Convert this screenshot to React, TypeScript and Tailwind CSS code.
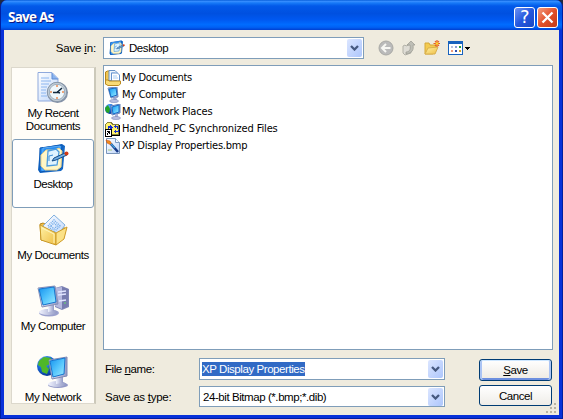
import type { ReactNode } from 'react';

const Gradients = () => (
  <svg className="absolute size-0" aria-hidden="true">
    <defs>
      <linearGradient id="screen" x1="0" y1="0" x2="1" y2="1">
        <stop offset="0" stopColor="#1592ee" /><stop offset=".5" stopColor="#53c4fc" /><stop offset="1" stopColor="#a0ecff" />
      </linearGradient>
      <linearGradient id="metal" x1="0" y1="0" x2="1" y2="0">
        <stop offset="0" stopColor="#f2f4ff" /><stop offset="1" stopColor="#9299c5" />
      </linearGradient>
      <linearGradient id="folder" x1="0" y1="0" x2="1" y2="1">
        <stop offset="0" stopColor="#fff3a8" /><stop offset="1" stopColor="#efbd43" />
      </linearGradient>
      <linearGradient id="paper" x1="0" y1="0" x2="1" y2="1">
        <stop offset="0" stopColor="#ffffff" /><stop offset="1" stopColor="#bdd5fa" />
      </linearGradient>
      <radialGradient id="globe" cx=".35" cy=".25" r=".8">
        <stop offset="0" stopColor="#6db6ff" /><stop offset=".5" stopColor="#1768d8" /><stop offset="1" stopColor="#06328f" />
      </radialGradient>
    </defs>
  </svg>
);

const RecentIcon = () => (
  <svg viewBox="0 0 32 32" className="size-8">
    <path d="M1 .5h14l6 6V29H1z" fill="url(#paper)" stroke="#8fa9dc" />
    <path d="M15 1v6h6" fill="#8ab4ef" stroke="#5f8bd3" />
    <path d="M4 6h8M4 9h10M4 12h8M4 15h6M4 18h5M4 21h5M4 24h6" stroke="#8cb6ef" />
    <circle cx="20.5" cy="20.5" r="10.5" fill="#8592a8" />
    <circle cx="20" cy="20" r="9.7" fill="#c4ced8" stroke="#8797a8" />
    <circle cx="20" cy="20" r="7.7" fill="#f0f8fc" stroke="#9cadbd" />
    <path d="M20 13v2M20 25v2M13 20h2M25 20h2" stroke="#ec8a50" strokeWidth="1.5" />
    <path d="m25 16-5 4.5h-4M20 20l3 1" stroke="#13293e" strokeWidth="1.6" fill="none" />
  </svg>
);

const DesktopIcon = ({ className }: { className: string }) => (
  <svg viewBox="0 0 32 32" className={className}>
    <path d="m3 5 22-4 3 2-2 23-2 2-21 2-2-3z" fill="#1568c5" />
    <path d="m3 5 22-3-2 24-20 3z" fill="#2a8df0" stroke="#0b55b1" />
    <path d="m6 5 17-2-1 22-17 2z" fill="none" stroke="#75c3ff" strokeWidth=".7" />
    <path d="M9 7h8l5-2 3 3-1 16-4 3H8l-4-4V12z" fill="#fff6c6" stroke="#e6cf8a" />
    <path d="m11 8 8-2 3 3-2 13-10 1z" fill="#dff3ff" stroke="#4c9bdd" strokeWidth="1.3" />
    <path d="M12 18v-5l4-1" fill="none" stroke="#3d8ed4" />
    <path d="m17 15 11-5 2 2-11 5-4 1z" fill="#71aee3" stroke="#164c86" />
    <circle cx="29.5" cy="10.5" r="2" fill="#d33a13" />
  </svg>
);

const FolderIcon = () => (
  <svg viewBox="0 0 32 32" className="size-8">
    <path d="m3 10 3-1 4 2 2 2 16 1-9 15L4 26z" fill="#f0bf48" stroke="#b8871c" />
    <path d="M6 12 17 1l11 10-9 13-9-4z" fill="url(#paper)" stroke="#82b1df" />
    <path d="m11 12 6-6 6 6-6 6zM14 12l3-3 3 3-3 3z" fill="none" stroke="#72abe9" strokeWidth="1.5" strokeDasharray="1 1" />
    <path d="m3 11 16 8v12L4 26z" fill="url(#folder)" stroke="#c99a2a" />
    <path d="m19 19 11-6-3 12-8 6z" fill="#fbe187" stroke="#ce9a25" />
    <path d="m5 14 12 6v9" stroke="#fff7bf" fill="none" />
  </svg>
);

const ComputerIcon = () => (
  <svg viewBox="0 0 32 32" className="size-8">
    <path d="m18 3 7-2 7 3v18l-7 3-7-3z" fill="#8287b7" />
    <path d="m18 3 7-1v22l-7-3z" fill="#b6b9df" /><path d="m25 2 6 2v17l-6 3z" fill="#777caf" />
    <path d="m21 7 8-1M21 10l8-1M22 16l7-1" stroke="#e1e5ff" strokeWidth="1.5" /><path d="M27 18h2" stroke="#61e066" />
    <ellipse cx="12" cy="28" rx="10" ry="3.4" fill="#9ba1cd" /><ellipse cx="11" cy="27" rx="9" ry="3" fill="url(#metal)" />
    <path d="m11 19 6-1v8l-6 1z" fill="url(#metal)" />
    <path d="m1 3 17-2 3 18-16 3z" fill="url(#metal)" stroke="#878eb6" />
    <path d="m2 4 15-2 2 15-13 3z" fill="url(#screen)" stroke="#1575cf" />
  </svg>
);

const NetworkIcon = () => (
  <svg viewBox="0 0 32 32" className="size-8">
    <circle cx="10" cy="10" r="10" fill="url(#globe)" />
    <path d="M7 1 2 5 1 9l3 2 1 5 5 2 2-5-3-3 4-2 1-6zM13 7l-1 5 4 5 3-2V8z" fill="#4fb829" />
    <ellipse cx="21" cy="29" rx="10" ry="3" fill="#9298c6" /><ellipse cx="20" cy="28" rx="9" ry="3" fill="url(#metal)" />
    <path d="m19 20 7-1v8l-7 1z" fill="url(#metal)" />
    <path d="m12 4 18-3v19l-15 3z" fill="url(#metal)" stroke="#8189b4" />
    <path d="m13 5 15-3-1 16-11 3z" fill="url(#screen)" stroke="#1675cf" />
  </svg>
);

const DocsSmall = () => (
  <svg viewBox="0 0 16 16" className="size-4 shrink-0">
    <path d="M.5 4V2l2-1h2l1 2v11h-5z" fill="#efc553" stroke="#b58519" />
    <path d="M4 .5h6l2 2v8H4z" fill="#eef7ff" stroke="#6591c5" /><path d="M6 3h4" stroke="#9abfe8" />
    <path d="M6.5 3h6l2 2v6h-8z" fill="#fff" stroke="#6593ce" /><path d="M8 6h4M8 8h5" stroke="#a9cef1" />
    <path d="M.5 10H3l1 1h11.5v3l-2 1.5H3L.5 14z" fill="#f9db77" stroke="#ba8b23" />
  </svg>
);
const PcSmall = () => (
  <svg viewBox="0 0 16 16" className="size-4 shrink-0">
    <path d="m3 1 9-1 1 10-7 1z" fill="url(#metal)" stroke="#7188ba" />
    <path d="m4 2 7-1 1 7-6 2z" fill="url(#screen)" stroke="#146bc4" />
    <path d="m8 11 3-1 1 3-3 1z" fill="#9da8d1" /><ellipse cx="9" cy="14" rx="4.5" ry="1.6" fill="#b8bfe2" stroke="#7e89b7" strokeWidth=".6" />
  </svg>
);
const NetSmall = () => (
  <svg viewBox="0 0 16 16" className="size-4 shrink-0">
    <circle cx="5" cy="5" r="5" fill="url(#globe)" /><path d="M3 1 0 4l1 4 3 1 1-4z" fill="#25a527" />
    <path d="m6 2 9-2v9l-8 2z" fill="url(#metal)" stroke="#6781b9" /><path d="m7 3 7-2v7l-6 2z" fill="url(#screen)" stroke="#126fcc" />
    <path d="M10 10h3v4h-3z" fill="#a8b1d9" /><ellipse cx="11" cy="14" rx="4.5" ry="1.5" fill="#bbc1e3" stroke="#7984b4" strokeWidth=".6" />
  </svg>
);
const SyncSmall = () => (
  <svg viewBox="0 0 16 16" className="size-4 shrink-0" shapeRendering="crispEdges">
    <path d="M0 3h1V2h1V1h5v1h1v1h6v11H0z" fill="#85803a" /><path d="M1 3h1V2h4v1h1v1h6v9H1z" fill="#fff36d" />
    <path d="M14 4h1v11H7v-1h7z" fill="#000" />
    <path d="M3 5h2V4h1v1h1v1h1v1H7v1H6v1H5V7H4v1H3zM10 4h1v1h2v3h-1V6h-1v1h-1V6H9V5h1zM9 10h1V9h1v1h2V9h1v2h-3v1h-1v-1H9z" fill="#1631cf" />
    <path d="M0 8h7v8H0z" /><path d="M1 9h5v6H1z" fill="#fff" /><path d="M2 10h3v3H4v-1H3v2H2v-2h1v-1H2z" />
  </svg>
);
const BitmapSmall = () => (
  <svg viewBox="0 0 16 16" className="size-4 shrink-0">
    <path d="M1.5.5h9l4 4v11h-13z" fill="url(#paper)" stroke="#7995ba" /><path d="M10.5.5v4h4" fill="#f6faff" stroke="#7d9bc2" />
    <path d="m1 2 4 1 2 3-1 1-4-2z" fill="#f28b19" stroke="#bd4514" strokeWidth=".5" />
    <path d="m6 6 7 8" stroke="#153887" strokeWidth="2.5" /><path d="m6 6 4 4" stroke="#41a1db" strokeWidth="1.2" />
    <path d="M3 12h4" stroke="#a5c779" />
  </svg>
);

const Arrow = () => (
  <span className="flex h-[18px] w-[15px] shrink-0 items-center justify-center rounded-[2px] bg-linear-to-br from-[#dce6ff] to-[#adc6fc]">
    <svg viewBox="0 0 9 6" className="h-1.5 w-[9px]">
      <path d="m1 1 3.5 3.5L8 1" fill="none" stroke="#46597f" strokeWidth="2.3" />
    </svg>
  </span>
);

const Combo = ({ children, className }: { children: ReactNode; className: string }) => (
  <div className={`flex items-center justify-between border border-[#7f9db9] bg-white pr-px ${className}`}>{children}<Arrow /></div>
);

const Place = ({ icon, children, className }: { icon: ReactNode; children: ReactNode; className: string }) => (
  <div className={`flex shrink-0 flex-col items-center text-center leading-[13px] ${className}`}>
    {icon}<span className="mt-[3px] whitespace-nowrap">{children}</span>
  </div>
);

const files = [
  { name: 'My Documents', icon: <DocsSmall />, fit: 'tracking-[-0.35px]' },
  { name: 'My Computer', icon: <PcSmall />, fit: 'tracking-[-0.28px]' },
  { name: 'My Network Places', icon: <NetSmall />, fit: 'tracking-[-0.18px]' },
  { name: 'Handheld_PC Synchronized Files', icon: <SyncSmall />, fit: 'tracking-[-0.14px]' },
  { name: 'XP Display Properties.bmp', icon: <BitmapSmall />, fit: 'tracking-[-0.22px]' },
];

export default function App() {
  return (
    <main className="h-[419px] w-[563px] bg-[#202a40] font-['Liberation_Sans',sans-serif] text-[11.5px] leading-[14px] tracking-[-0.43px] text-black">
      <Gradients />
      <div className="flex h-full flex-col overflow-hidden rounded-t-[7px] border-x border-b border-[#001ea0] bg-[#0831d9]">
        <header className="flex h-[30px] shrink-0 items-center bg-[linear-gradient(180deg,#0058d6_0,#398fff_4%,#1679f7_10%,#0259e9_20%,#0050e0_45%,#0058f0_65%,#006cff_82%,#0060f4_91%,#003fd0_100%)] pr-1 pl-[7px] pt-1">
          <h1 className="flex-1 font-['Open_Sans',sans-serif] text-[13.5px] leading-4 font-bold tracking-[-0.75px] text-white [text-shadow:1px_1px_#0a1883]">Save As</h1>
          <div className="flex gap-[2px]">
            <button className="flex size-[21px] items-center justify-center rounded-[3px] border border-white bg-linear-to-br from-[#6e91f2] via-[#2458df] to-[#1947c3] font-['DejaVu_Sans',sans-serif] text-[18px] leading-none text-white">?</button>
            <button aria-label="Close" className="flex size-[21px] items-center justify-center rounded-[3px] border border-white bg-linear-to-br from-[#f19a7d] via-[#e3502a] to-[#c43b17]">
              <svg viewBox="0 0 13 13" className="size-[13px]"><path d="m1.5 1.5 10 10m0-10-10 10" stroke="white" strokeWidth="2.3" /></svg>
            </button>
          </div>
        </header>
        <section className="relative mx-[3px] mb-[3px] flex min-h-0 flex-1 flex-col bg-[#efebde]">
          <div className="flex h-[35px] shrink-0 items-start pt-[7px]">
            <label className="w-[99px] pt-[4px] pr-[7px] text-right tracking-[-0.15px]">Save <u>i</u>n:</label>
            <Combo className="h-[22px] w-[261px] pl-[5px]">
              <span className="flex flex-1 items-center gap-[4px]"><DesktopIcon className="size-4" />Desktop</span>
            </Combo>
            <div className="ml-[14px] flex h-[22px] items-center">
              <svg viewBox="0 0 16 16" className="size-4"><circle cx="8" cy="8" r="7" fill="#bababa" stroke="#a9a9a5" /><path d="M12.5 8H4m4-4L4 8l4 4" fill="none" stroke="#f7f7f3" strokeWidth="2" /></svg>
              <svg viewBox="0 0 16 16" className="ml-[7px] size-4"><path d="m2 6 2-1 1 1 5-2v9l-6 2-2-2z" fill="#dedcd5" stroke="#b2b1a8" /><path d="M5 12c3 0 5-2 4-7H6l4-4 4 4h-2c1 5-1 8-7 9z" fill="#bebeb6" stroke="#999990" strokeWidth=".7" /></svg>
              <svg viewBox="0 0 16 16" className="ml-[7px] size-4"><path d="M1 14V3h4l1 2h6v3l-3 6z" fill="#f3cb51" stroke="#d5a83a" /><path d="m1 14 3-6 10-1-3 7z" fill="url(#folder)" stroke="#d8b04e" /><path d="M13 0v7M9.5 3.5h6.5M11 1l4 5m0-5-4 5" stroke="#e75e1c" strokeWidth="1.2" /><circle cx="13" cy="3.5" r="1.3" fill="#ffd72d" /></svg>
              <svg viewBox="0 0 15 14" className="ml-[8px] h-[14px] w-[15px]" shapeRendering="crispEdges"><path d="M0 0h15v14H0z" fill="#1762be" /><path d="M1 3h13v10H1z" fill="#fff" /><path d="M3 5h2v1H3z" fill="#879ed9" /><path d="M3 5h2v2H3z" fill="#b9c1de" /><path d="M7 5h2v2H7z" fill="#879ed9" /><path d="M11 5h2v2h-2z" fill="#269e35" /><path d="M3 9h2v2H3z" fill="#ee9b7b" /><path d="M7 9h2v2H7z" fill="#304fae" /><path d="M11 9h2v2h-2z" fill="#d6a429" /></svg>
              <svg viewBox="0 0 5 3" className="ml-[2px] h-[3px] w-[5px]" shapeRendering="crispEdges"><path d="M0 0h5v1H4v1H3v1H2V2H1V1H0z" /></svg>
            </div>
          </div>
          <div className="flex min-h-0 flex-1 pl-[7px]">
            <nav className="mt-[2px] flex h-[337px] w-[85px] shrink-0 flex-col overflow-hidden border border-r-2 border-[#dcd8cc] bg-[#fffdf8] border-r-[#ccc9ba]">
              <Place icon={<RecentIcon />} className="h-[71px] pt-[4px]">My Recent<br />Documents</Place>
              <Place icon={<DesktopIcon className="size-8" />} className="h-[69px] rounded-[3px] border border-[#7f9db9] bg-white pt-[3px]">Desktop</Place>
              <Place icon={<FolderIcon />} className="h-[71px] pt-[6px]">My Documents</Place>
              <Place icon={<ComputerIcon />} className="h-[71px] pt-[6px]">My Computer</Place>
              <Place icon={<NetworkIcon />} className="pt-[6px]">My Network</Place>
            </nav>
            <div className="ml-[7px] flex flex-col">
              <ul className="h-[285px] w-[450px] border border-[#7f9db9] bg-white pt-[3px] pl-px font-['DejaVu_Sans_Condensed','DejaVu_Sans',sans-serif] text-[11px]">
                {files.map(file => <li key={file.name} className="flex h-[17px] items-center gap-px">{file.icon}<span className={file.fit}>{file.name}</span></li>)}
              </ul>
              <div className="mt-[8px] flex w-[450px] justify-between">
                <div className="flex flex-col gap-[6px]">
                  <div className="flex items-center"><label className="w-24 pl-[2px]">File <u>n</u>ame:</label><Combo className="h-[22px] w-[246px] pl-[2px]"><span className="bg-[#316ac5] text-white">XP Display Properties</span></Combo></div>
                  <div className="flex items-center"><label className="w-24 pl-[2px] tracking-[-0.25px]">Save as <u>t</u>ype:</label><Combo className="h-[21px] w-[246px] pl-[3px]"><span>24-bit Bitmap (*.bmp;*.dib)</span></Combo></div>
                </div>
                <div className="mr-px flex flex-col gap-1 pt-px">
                  <button className="h-[22px] w-[73px] rounded-[3px] border border-[#003c74] bg-linear-to-b from-white to-[#eeeae2] shadow-[inset_0_1px_#cee7ff,inset_2px_0_#abc4f4,inset_-2px_0_#abc4f4,inset_0_-2px_#6d8fdf]"><u>S</u>ave</button>
                  <button className="h-[21px] w-[73px] rounded-[3px] border border-[#003c74] bg-linear-to-b from-white to-[#efede8]">Cancel</button>
                </div>
              </div>
            </div>
          </div>
          <svg viewBox="0 0 12 12" className="absolute right-0.5 bottom-px size-3" shapeRendering="crispEdges"><path d="M9 1h2v2H9zM5 5h2v2H5zM9 5h2v2H9zM1 9h2v2H1zM5 9h2v2H5zM9 9h2v2H9z" fill="#b8b4a3" /></svg>
        </section>
      </div>
    </main>
  );
}
